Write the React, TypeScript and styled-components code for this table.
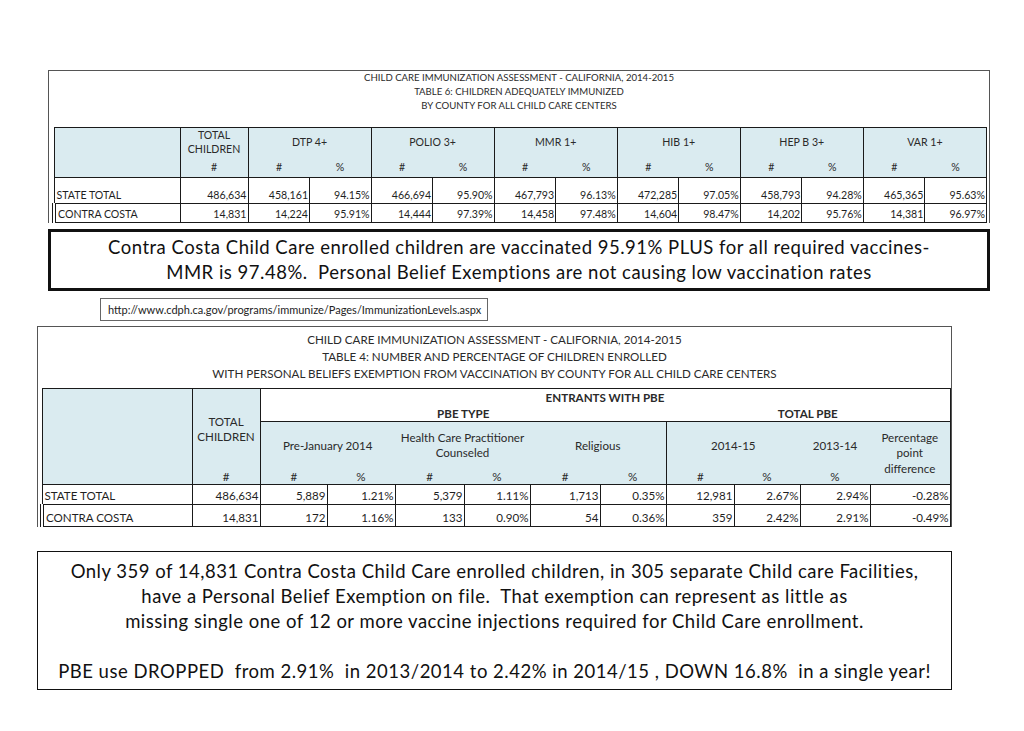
import { FC, Fragment } from 'react';
import styled, { createGlobalStyle } from 'styled-components';

const GlobalStyle = createGlobalStyle`
   html, body {
      margin: 0;
      padding: 0;
      background: #ffffff;
   }
   body {
      font-family: Lato, "Open Sans", sans-serif;
      color: #1a1a1a;
   }
`;

const Page = styled.main`
   width: 1024px;
   height: 731px;
   padding-top: 70px;
   box-sizing: border-box;
   display: flex;
   flex-direction: column;
   align-items: flex-start;
`;

const Sheet = styled.section<{ $left: number; $width: number; $top?: number }>`
   margin-left: ${(p) => p.$left}px;
   margin-top: ${(p) => p.$top ?? 0}px;
   width: ${(p) => p.$width}px;
   box-sizing: border-box;
   border: 1px solid #555;
   border-bottom: none;
`;

const Titles = styled.div<{ $size: number; $line: number; $height: number; $pad: number }>`
   height: ${(p) => p.$height}px;
   padding-top: ${(p) => p.$pad}px;
   box-sizing: border-box;
   text-align: center;
   font-size: ${(p) => p.$size}px;
   line-height: ${(p) => p.$line}px;
   color: #2a2a2a;
   white-space: nowrap;
`;

const Grid = styled.table<{ $size: number; $left: number; $width: number; $lh: number }>`
   margin-left: ${(p) => p.$left}px;
   width: ${(p) => p.$width}px;
   border-collapse: collapse;
   table-layout: fixed;
   font-size: ${(p) => p.$size}px;
   line-height: ${(p) => p.$lh};
   border: 1.5px solid #1a1a1a;
`;

const Th = styled.th<{ $r?: boolean; $b?: boolean; $white?: boolean; $bold?: boolean; $v?: string }>`
   background: ${(p) => (p.$white ? '#ffffff' : '#daebf0')};
   font-weight: ${(p) => (p.$bold ? 700 : 400)};
   color: #2a2a2a;
   text-align: center;
   vertical-align: ${(p) => p.$v ?? 'middle'};
   padding: 0;
   white-space: nowrap;
   border-right: ${(p) => (p.$r ? '1.5px solid #1a1a1a' : 'none')};
   border-bottom: ${(p) => (p.$b ? '1.5px solid #1a1a1a' : 'none')};
`;

const Row = styled.tr<{ $h: number }>`
   height: ${(p) => p.$h}px;
`;

const Td = styled.td<{ $label?: boolean; $double?: boolean }>`
   border: 1.3px solid #1a1a1a;
   border-left: ${(p) => (p.$double ? '4px double #1a1a1a' : '1.3px solid #1a1a1a')};
   padding: 0 1px 1px 2px;
   vertical-align: bottom;
   text-align: ${(p) => (p.$label ? 'left' : 'right')};
   line-height: 1.2;
   color: #1f1f1f;
   white-space: nowrap;
   overflow: hidden;
`;

const Callout = styled.div<{ $left: number; $width: number; $height: number; $top: number; $border: number; $pad?: number; $track: number }>`
   margin-left: ${(p) => p.$left}px;
   margin-top: ${(p) => p.$top}px;
   width: ${(p) => p.$width}px;
   height: ${(p) => p.$height}px;
   box-sizing: border-box;
   border: ${(p) => p.$border}px solid #111;
   padding-top: ${(p) => p.$pad ?? 0}px;
   display: flex;
   flex-direction: column;
   justify-content: ${(p) => (p.$pad ? 'flex-start' : 'center')};
   align-items: center;
   font-size: 18.5px;
   letter-spacing: ${(p) => p.$track}px;
   line-height: 25px;
   color: #111;
`;

const Line = styled.div`
   white-space: pre;
`;

const Gap = styled.div`
   height: 25px;
`;

const Link = styled.div`
   margin-left: 100px;
   margin-top: 7px;
   width: 388px;
   height: 23px;
   box-sizing: border-box;
   border: 1px solid #666;
   padding-left: 7px;
   display: flex;
   align-items: center;
   font-size: 11px;
   color: #222;
   white-space: nowrap;
`;

const vaccines = [
   { name: 'DTP 4+', state: ['458,161', '94.15%'], cc: ['14,224', '95.91%'] },
   { name: 'POLIO 3+', state: ['466,694', '95.90%'], cc: ['14,444', '97.39%'] },
   { name: 'MMR 1+', state: ['467,793', '96.13%'], cc: ['14,458', '97.48%'] },
   { name: 'HIB 1+', state: ['472,285', '97.05%'], cc: ['14,604', '98.47%'] },
   { name: 'HEP B 3+', state: ['458,793', '94.28%'], cc: ['14,202', '95.76%'] },
   { name: 'VAR 1+', state: ['465,365', '95.63%'], cc: ['14,381', '96.97%'] },
];

const pbeRows = [
   { label: 'STATE TOTAL', h: 20, cells: ['486,634', '5,889', '1.21%', '5,379', '1.11%', '1,713', '0.35%', '12,981', '2.67%', '2.94%', '-0.28%'] },
   { label: 'CONTRA COSTA', h: 22, double: true, cells: ['14,831', '172', '1.16%', '133', '0.90%', '54', '0.36%', '359', '2.42%', '2.91%', '-0.49%'] },
];

const pbeCols = [150, 68, 67, 68, 69, 66, 70, 66, 68, 66, 70, 80];

const ImmunizedTable: FC = () => (
   <Grid $size={10.6} $lh={1.3} $left={3} $width={935}>
      <colgroup>
         <col style={{ width: 126 }} />
         <col style={{ width: 68 }} />
         {vaccines.map((v) => (
            <Fragment key={v.name}>
               <col />
               <col />
            </Fragment>
         ))}
      </colgroup>
      <tbody>
         <Row $h={31}>
            <Th rowSpan={2} $r $b />
            <Th $r>TOTAL<br />CHILDREN</Th>
            {vaccines.map((v) => (
               <Th key={v.name} colSpan={2} $r>{v.name}</Th>
            ))}
         </Row>
         <Row $h={19}>
            <Th $r $b>#</Th>
            {vaccines.map((v) => (
               <Fragment key={v.name}>
                  <Th $b>#</Th>
                  <Th $r $b>%</Th>
               </Fragment>
            ))}
         </Row>
         <Row $h={26}>
            <Td $label>STATE TOTAL</Td>
            <Td>486,634</Td>
            {vaccines.map((v) => (
               <Fragment key={v.name}>
                  <Td>{v.state[0]}</Td>
                  <Td>{v.state[1]}</Td>
               </Fragment>
            ))}
         </Row>
         <Row $h={19}>
            <Td $label $double>CONTRA COSTA</Td>
            <Td>14,831</Td>
            {vaccines.map((v) => (
               <Fragment key={v.name}>
                  <Td>{v.cc[0]}</Td>
                  <Td>{v.cc[1]}</Td>
               </Fragment>
            ))}
         </Row>
      </tbody>
   </Grid>
);

const ExemptionTable: FC = () => (
   <Grid $size={11.6} $lh={1.3} $left={2} $width={908}>
      <colgroup>
         {pbeCols.map((w, i) => (
            <col key={i} style={{ width: w }} />
         ))}
      </colgroup>
      <tbody>
         <Row $h={17}>
            <Th rowSpan={4} $r $b />
            <Th rowSpan={3} $r>TOTAL<br />CHILDREN</Th>
            <Th colSpan={10} $white $bold $v="bottom">ENTRANTS WITH PBE</Th>
         </Row>
         <Row $h={16}>
            <Th colSpan={6} $white $bold $b $v="top">PBE TYPE</Th>
            <Th colSpan={4} $white $bold $b $v="top">TOTAL PBE</Th>
         </Row>
         <Row $h={47}>
            <Th colSpan={2}>Pre-January 2014</Th>
            <Th colSpan={2}>Health Care Practitioner<br />Counseled</Th>
            <Th colSpan={2} $r>Religious</Th>
            <Th colSpan={2}>2014-15</Th>
            <Th>2013-14</Th>
            <Th rowSpan={2} $b $r>Percentage<br />point<br />difference</Th>
         </Row>
         <Row $h={16}>
            <Th $r $b $v="bottom">#</Th>
            <Th $b $v="bottom">#</Th>
            <Th $b $v="bottom">%</Th>
            <Th $b $v="bottom">#</Th>
            <Th $b $v="bottom">%</Th>
            <Th $b $v="bottom">#</Th>
            <Th $r $b $v="bottom">%</Th>
            <Th $b $v="bottom">#</Th>
            <Th $b $v="bottom">%</Th>
            <Th $b $v="bottom">%</Th>
         </Row>
         {pbeRows.map((r) => (
            <Row key={r.label} $h={r.h}>
               <Td $label $double={r.double}>{r.label}</Td>
               {r.cells.map((c, i) => (
                  <Td key={i}>{c}</Td>
               ))}
            </Row>
         ))}
      </tbody>
   </Grid>
);

const App: FC = () => (
   <>
      <GlobalStyle />
      <Page>
         <Sheet $left={48} $width={942}>
            <Titles $size={9.6} $line={14} $height={56} $pad={0}>
               CHILD CARE IMMUNIZATION ASSESSMENT - CALIFORNIA, 2014-2015<br />
               TABLE 6: CHILDREN ADEQUATELY IMMUNIZED<br />
               BY COUNTY FOR ALL CHILD CARE CENTERS
            </Titles>
            <ImmunizedTable />
         </Sheet>

         <Callout $left={48} $width={942} $height={62} $top={6} $border={3} $track={0.5}>
            <Line>Contra Costa Child Care enrolled children are vaccinated 95.91% PLUS for all required vaccines-</Line>
            <Line>MMR is 97.48%.  Personal Belief Exemptions are not causing low vaccination rates</Line>
         </Callout>

         <Link>http://www.cdph.ca.gov/programs/immunize/Pages/ImmunizationLevels.aspx</Link>

         <Sheet $left={37} $width={915} $top={5}>
            <Titles $size={11.6} $line={17} $height={61} $pad={4}>
               CHILD CARE IMMUNIZATION ASSESSMENT - CALIFORNIA, 2014-2015<br />
               TABLE 4: NUMBER AND PERCENTAGE OF CHILDREN ENROLLED<br />
               WITH PERSONAL BELIEFS EXEMPTION FROM VACCINATION BY COUNTY FOR ALL CHILD CARE CENTERS
            </Titles>
            <ExemptionTable />
         </Sheet>

         <Callout $left={37} $width={915} $height={139} $top={24} $border={1.5} $pad={7} $track={0.5}>
            <Line>Only 359 of 14,831 Contra Costa Child Care enrolled children, in 305 separate Child care Facilities,</Line>
            <Line>have a Personal Belief Exemption on file.  That exemption can represent as little as</Line>
            <Line>missing single one of 12 or more vaccine injections required for Child Care enrollment.</Line>
            <Gap />
            <Line>PBE use DROPPED  from 2.91%  in 2013/2014 to 2.42% in 2014/15 , DOWN 16.8%  in a single year!</Line>
         </Callout>
      </Page>
   </>
);

export default App;
